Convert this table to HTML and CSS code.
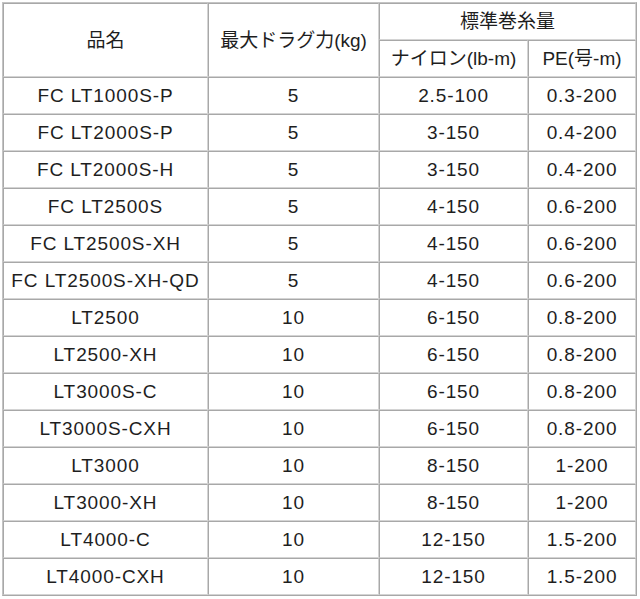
FILE: index.html
```html
<!DOCTYPE html>
<html lang="ja">
<head>
<meta charset="utf-8">
<link rel="stylesheet" href="styles.css">
</head>
<body>
<table class="spec">
  <colgroup>
    <col class="c1"><col class="c2"><col class="c3"><col class="c4">
  </colgroup>
  <thead>
    <tr><th rowspan="2">品名</th><th rowspan="2">最大ドラグ力(kg)</th><th colspan="2">標準巻糸量</th></tr>
    <tr><th>ナイロン(lb-m)</th><th>PE(号-m)</th></tr>
  </thead>
  <tbody>
    <tr><td>FC LT1000S-P</td><td>5</td><td>2.5-100</td><td>0.3-200</td></tr>
    <tr><td>FC LT2000S-P</td><td>5</td><td>3-150</td><td>0.4-200</td></tr>
    <tr><td>FC LT2000S-H</td><td>5</td><td>3-150</td><td>0.4-200</td></tr>
    <tr><td>FC LT2500S</td><td>5</td><td>4-150</td><td>0.6-200</td></tr>
    <tr><td>FC LT2500S-XH</td><td>5</td><td>4-150</td><td>0.6-200</td></tr>
    <tr><td>FC LT2500S-XH-QD</td><td>5</td><td>4-150</td><td>0.6-200</td></tr>
    <tr><td>LT2500</td><td>10</td><td>6-150</td><td>0.8-200</td></tr>
    <tr><td>LT2500-XH</td><td>10</td><td>6-150</td><td>0.8-200</td></tr>
    <tr><td>LT3000S-C</td><td>10</td><td>6-150</td><td>0.8-200</td></tr>
    <tr><td>LT3000S-CXH</td><td>10</td><td>6-150</td><td>0.8-200</td></tr>
    <tr><td>LT3000</td><td>10</td><td>8-150</td><td>1-200</td></tr>
    <tr><td>LT3000-XH</td><td>10</td><td>8-150</td><td>1-200</td></tr>
    <tr><td>LT4000-C</td><td>10</td><td>12-150</td><td>1.5-200</td></tr>
    <tr><td>LT4000-CXH</td><td>10</td><td>12-150</td><td>1.5-200</td></tr>
  </tbody>
</table>
</body>
</html>
```

FILE: styles.css
```css
html, body {
  margin: 0;
  background: #ffffff;
}
body {
  padding: 2px;
  font-family: "Liberation Sans", "Noto Sans CJK JP", sans-serif;
  color: #1e1e1e;
}
.spec {
  border-collapse: separate;
  border-spacing: 0;
  table-layout: fixed;
  width: 635px;
  border-top: 1px solid #c4c4c4;
  border-left: 1px solid #c4c4c4;
  border-right: 1px solid #a8a8a8;
  border-bottom: 1px solid #a8a8a8;
}
.c1 { width: 205px; }
.c2 { width: 171px; }
.c3 { width: 149px; }
.c4 { width: 108px; }
.spec th,
.spec td {
  padding: 0;
  height: 35px;
  line-height: 35px;
  font-size: 19px;
  font-weight: normal;
  text-align: center;
  white-space: nowrap;
  border-top: 1px solid #a8a8a8;
  border-left: 1px solid #a8a8a8;
  border-right: 1px solid #d4d4d4;
  border-bottom: 1px solid #d4d4d4;
}
.spec td {
  letter-spacing: 0.9px;
}
```
